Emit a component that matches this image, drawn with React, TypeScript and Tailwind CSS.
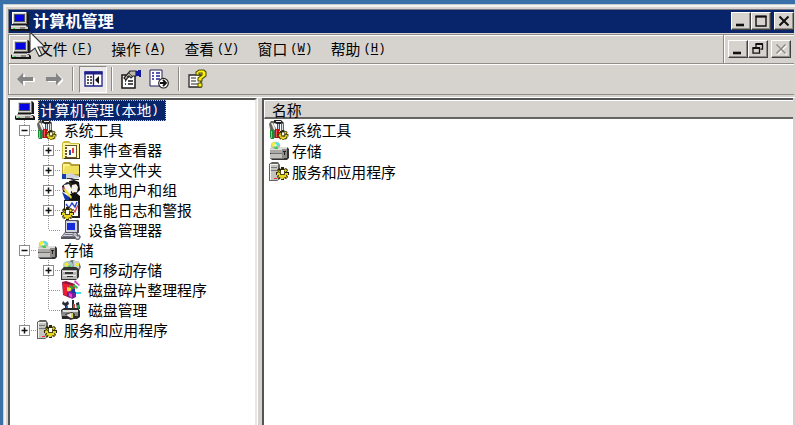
import React from "react";

type IconProps = { name: string; className?: string };

const gear = (x: number, y: number) => (
  <g transform={`translate(${x} ${y})`}>
    <path d="M5 0h3v2l2-1 2 2-1 2h2v3h-2l1 2-2 2-2-1v2H5v-2l-2 1-2-2 1-2H0V5h2L1 3l2-2 2 1z" fill="#2b2600" />
    <path d="M2 3l2 1-1 2h2l1 2h2l1-2h3v2l-2 0 1 3-2-1-2 2H5l-1-2-2 1 1-3H1V6l2-1z" fill="#e6d522" />
    <path d="M9 2l2 1-1 2-2-1z" fill="#e6d522" />
    <rect x="5" y="3" width="3" height="4" fill="#fff" />
    <path d="M4 4h1v3h3V4h1v4H4z" fill="#514a18" />
  </g>
);

const computer = (
  <g>
    <path d="M3 1h14l2 2v11h-3v1h2l2 2v3H1l-1-1v-3l3-2z" fill="#171717" />
    <path d="M2 1h14l1 1v11H2z" fill="#d8d7cf" />
    <path d="M2 1h14v1H3v11H2z" fill="#fff" />
    <path d="M16 2h1v11H3v-1h13z" fill="#77756f" />
    <path d="M4 3h11v8H4z" fill="#4c5066" />
    <path d="M5 4h9v6H5z" fill="#0505e4" />
    <path d="M1 15h15l2 1v2H1z" fill="#c9c7bf" />
    <path d="M1 14.5h15v1H1z" fill="#f8f8f5" />
    <path d="M3 17h2v1H3z" fill="#23e045" />
    <path d="M10 16.5h5v1h-5z" fill="#444" />
  </g>
);

const disk = (
  <g>
    <path d="M1 8l3-2h14l2 2v9l-2 2H3l-2-2z" fill="#343434" />
    <path d="M1 8l3-2h14v3H1z" fill="#dedddb" />
    <path d="M1 9h13v3H1z" fill="#aaa9a6" />
    <path d="M1 13h13v4H1z" fill="#c1c0bd" />
    <path d="M2 12h12v1H2zM2 17h13v1H2z" fill="#707070" />
    <path d="M13 8h5v9h-5z" fill="#8d8c89" />
    <path d="M14 10h3v1h-3z" fill="#222" />
    <path d="M15 11h1v3h-1z" fill="#222" />
    <ellipse cx="6.5" cy="4.5" rx="4.8" ry="3.8" fill="#bdbcaf" />
    <path d="M3 2l3-1 1 3-2 2-3-1z" fill="#f3ed3b" />
    <path d="M7 1l3 1 1 3-4-1z" fill="#51e2df" />
    <path d="M5 5l3 0 1 3H6z" fill="#36cf49" />
    <rect x="5.5" y="3.5" width="2" height="2" fill="#fff" />
  </g>
);

const drawings: Record<string, React.ReactNode> = {
  computer,
  tools: (
    <g>
      <path d="M2 1h3v4l3 5v8H3L0 4z" fill="#62645e" />
      <path d="M2 3l2 0 3 7H5z" fill="#e8e8e1" />
      <path d="M5 0h7l3 3v3h-3V4H8L5 3z" fill="#202020" />
      <path d="M7 1h5v1H7z" fill="#eee" />
      <path d="M8 4h3v7H8z" fill="#24509e" />
      <path d="M9 4h1v7H9z" fill="#bed7ef" />
      <path d="M1 10h4v9H2l-1-2z" fill="#198d31" />
      <path d="M2 11h1v7H2z" fill="#6be065" />
      <path d="M6 9h4v9H6z" fill="#b60f16" />
      <path d="M7 10h1v7H7z" fill="#ff5050" />
      <path d="M12 3h3v9h-3z" fill="#666" />
      <path d="M13 4h1v7h-1z" fill="#ddd" />
      <g transform="translate(9 10) scale(.8)">{gear(0, 0)}</g>
    </g>
  ),
  event: (
    <g>
      <path d="M1 3l2-2h5l2 2h8l1 1v15H1z" fill="#c9bc40" />
      <path d="M2 3h6l2 1h8v14H2z" fill="#fff29b" />
      <path d="M4 5h12v13H4z" fill="#61552d" />
      <path d="M6 6h9v11H6z" fill="#fffce5" />
      <path d="M4 6h2v1H4zm0 3h2v1H4zm0 3h2v1H4zm0 3h2v1H4z" fill="#fff" />
      <path d="M8 10h2v5H8z" fill="#2b45ce" />
      <path d="M11 8h2v5h-2z" fill="#eb3b42" />
      <path d="M18 4h1v15H3v-1h15z" fill="#40391d" />
    </g>
  ),
  share: (
    <g>
      <path d="M1 4l2-2h6l2 2h8v12H1z" fill="#b69e35" />
      <path d="M2 4h6l2 2h8v8H2z" fill="#fff489" />
      <path d="M4 6h14v8H2z" fill="#eedf5d" />
      <path d="M18 5h1v12h-2v-1h1z" fill="#40391d" />
      <path d="M1 14h4v5H1z" fill="#1442aa" />
      <path d="M5 14l5-1 4 2 4 1v2l-5 1-3-1H5z" fill="#cfd5de" />
      <path d="M6 18h5l2 1h5v1h-7l-2-1H5z" fill="#333" />
    </g>
  ),
  users: (
    <g>
      <path d="M8 1l5-1 5 2 1 8-4 4-5-1z" fill="#101010" />
      <path d="M11 5l4-1 2 3-1 5-4 2-2-4z" fill="#f4efe6" />
      <path d="M1 6l5-4 5 1-1 4-3 6-5-1z" fill="#272727" />
      <path d="M3 5l5-1 3 6-3 4-4-2z" fill="#f9f7ee" />
      <path d="M1 12l9 6v2H4z" fill="#1637a9" />
      <path d="M9 14l5-2 5 4v4H8z" fill="#111" />
      <path d="M2 9l2-1 7 9-1 2z" fill="#ece039" />
      <path d="M1 8l2-1 1 2-2 1z" fill="#d84178" />
    </g>
  ),
  perf: (
    <g>
      <path d="M3 0h16v18H3z" fill="#222" />
      <path d="M4 1h13v15H4z" fill="#fcfcff" />
      <path d="M5 4l3 4 3-5 3 4 2-5" fill="none" stroke="#2540ca" strokeWidth="1.4" />
      <path d="M12 9l2 3 3-7" fill="none" stroke="#e53a4a" strokeWidth="1.3" />
      <g transform="translate(0 7)">{gear(0, 0)}</g>
    </g>
  ),
  device: (
    <g>
      <path d="M4 0h13l1 1v12H4z" fill="#50515c" />
      <path d="M5 1h10l1 1v10H5z" fill="#d3d3e0" />
      <path d="M6 3h8v7H6z" fill="#152bdc" />
      <path d="M4 12h12l2 4v3H0v-2z" fill="#55565f" />
      <path d="M4 13h11l2 4H1z" fill="#d5d6e0" />
      <path d="M4 14h9v1H3zM2 16h12v1H2z" fill="#70717f" />
      <path d="M12 13l5 3 1-2 2 3-2 3h-3l-1-3-3-2z" fill="#6d6f78" />
      <path d="M13 14l4 3 1-1v2l-2 1-2-3-2-1z" fill="#dcdde2" />
    </g>
  ),
  disk,
  removable: (
    <g>
      <path d="M3 6l3-4 5-2 7 2 2 5-2 4h-3V9H2z" fill="#717572" />
      <ellipse cx="7" cy="5" rx="5" ry="4" fill="#a8c7c4" />
      <path d="M3 4l3-2 2 3-3 2z" fill="#f2e83a" />
      <path d="M6 7l3-2 2 3-3 1z" fill="#41c95a" />
      <path d="M12 1h6v9h-5z" fill="#c7d5d3" />
      <path d="M14 3h4v3h-4z" fill="#eee643" />
      <path d="M0 10l3-3h12l3 2v8l-3 3H0z" fill="#333" />
      <path d="M1 10h15v9H1z" fill="#b8b8b6" />
      <path d="M2 11h13v1H2zM2 15h13v1H2z" fill="#eee" />
      <path d="M4 12h8v2H4zm2 4h6v1H6z" fill="#333" />
    </g>
  ),
  defrag: (
    <g>
      <path d="M1 2l4-1 9 3v11l-5 3-7-3z" fill="#901538" />
      <path d="M2 3l4 1v12l-4-2z" fill="#ed1c32" />
      <path d="M6 4l8 2v8l-8-2z" fill="#e3242f" />
      <path d="M8 5l4 2v5l-4-2z" fill="#27a24a" />
      <path d="M6 7l4 1v4L6 11z" fill="#eddf38" />
      <path d="M7 12l4-2 4 2v5l-4 2-4-3z" fill="#7a1ca0" />
      <path d="M8 13l3 1v4l-3-2z" fill="#e645c9" />
      <path d="M11 9h3v4h-3z" fill="#1739a4" />
      <path d="M13 4l4 3-1 2-4-3z" fill="#28c64e" />
      <path d="M14 0l5 5-1 1-5-4z" fill="#c94ec4" />
      <path d="M15 12h5v2h-5z" fill="#3be0e0" />
    </g>
  ),
  diskmgmt: (
    <g>
      <path d="M2 1l2 2 3-2 1 3-2 2v4H4V6L1 4zM11 0h2v9h-2zM15 3l3-1 1 7h-3z" fill="#252c36" />
      <path d="M5 6h2v5H5z" fill="#315fca" />
      <path d="M12 4h2v6h-2z" fill="#d43e33" />
      <path d="M16 5h2v5h-2z" fill="#279b47" />
      <path d="M0 10l3-2h14l2 3v6l-3 2H1z" fill="#282828" />
      <path d="M1 10h16v6H1z" fill="#8a8a8a" />
      <path d="M2 10h15v2H2z" fill="#dedede" />
      <path d="M4 14l7-2 3 2-1 5-4 1z" fill="#353535" />
      <path d="M5 15l5-2v5z" fill="#f0f0e8" />
      <path d="M10 13h2v5h-2z" fill="#dfd549" />
    </g>
  ),
  services: (
    <g>
      <path d="M0 2l3-2h6l2 3v14l-3 2H0z" fill="#62625f" />
      <path d="M1 2h8v16H1z" fill="#c3c3bf" />
      <path d="M1 2h8v1H2v15H1z" fill="#f2f2ef" />
      <path d="M2 5h6v1H2zm0 3h6v1H2z" fill="#777" />
      <path d="M5 16h3v1H5z" fill="#ef322f" />
      {gear(7, 5)}
    </g>
  ),
  properties: (
    <g>
      <path d="M1 6h13v13H1z" fill="#fff" stroke="#171717" strokeWidth="1.5" />
      <path d="M4 12h1m2 0h5M4 15h1m2 0h5" stroke="#171717" strokeWidth="1.3" />
      <path d="M3 9l6-7h6v5h-3l-2 2-2-2-3 4z" fill="#bdb8ab" stroke="#252525" strokeWidth="1.2" />
      <path d="M8 4l3 3M6 7l2 2" stroke="#444" />
      <path d="M15 2h2V1h3v7h-2V7h-3z" fill="#111b9f" />
    </g>
  ),
  exportList: (
    <g>
      <path d="M1 1h12v16H1z" fill="#fff" stroke="#20205c" />
      <path d="M3 4h2m2 0h4M3 7h2m2 0h4M3 10h2m2 0h4" stroke="#202099" strokeWidth="1.4" />
      <circle cx="14.5" cy="14.2" r="4.8" fill="#fff" stroke="#222" strokeWidth="1.2" />
      <path d="M11 14h6m-3-3 3 3-3 3" stroke="#111" strokeWidth="1.8" fill="none" />
    </g>
  ),
  help: (
    <g>
      <path d="M1 6h12v12H1z" fill="#fff" stroke="#292929" strokeWidth="1.3" />
      <path d="M3 9h5m-5 3h5m-5 3h7" stroke="#222" />
      <path d="M8 6V3l3-2h5l2 2v4l-4 3v2h-4V9l4-3V4h-3v2z" fill="#f7ef16" stroke="#554e00" strokeWidth="1.1" />
      <path d="M10 14h4v4h-4z" fill="#f7ef16" stroke="#554e00" />
    </g>
  ),
};

function Icon({ name, className = "" }: IconProps) {
  return <svg className={`h-5 w-5 shrink-0 ${className}`} viewBox="0 0 20 20">{drawings[name]}</svg>;
}

type Node = { label: string; icon: string; level: 1 | 2; sign?: string; last?: boolean };

const nodes: Node[] = [
  { label: "系统工具", icon: "tools", level: 1, sign: "-" },
  { label: "事件查看器", icon: "event", level: 2, sign: "+" },
  { label: "共享文件夹", icon: "share", level: 2, sign: "+" },
  { label: "本地用户和组", icon: "users", level: 2, sign: "+" },
  { label: "性能日志和警报", icon: "perf", level: 2, sign: "+" },
  { label: "设备管理器", icon: "device", level: 2, last: true },
  { label: "存储", icon: "disk", level: 1, sign: "-" },
  { label: "可移动存储", icon: "removable", level: 2, sign: "+" },
  { label: "磁盘碎片整理程序", icon: "defrag", level: 2 },
  { label: "磁盘管理", icon: "diskmgmt", level: 2, last: true },
  { label: "服务和应用程序", icon: "services", level: 1, sign: "+", last: true },
];

function Branch({ sign, last, pass }: { sign?: string; last?: boolean; pass?: boolean }) {
  return (
    <svg className="h-5 w-6 shrink-0" viewBox="0 0 24 20" shapeRendering="crispEdges">
      <g stroke="#929292" strokeDasharray="1 1">
        <path d={last ? "M12.5 0V10" : "M12.5 0V20"} />
        {!pass && <path d="M13 10.5H24" />}
      </g>
      {sign && (
        <g>
          <rect x="7.5" y="5.5" width="10" height="10" fill="#fff" stroke="#8c8c8c" />
          <path d={sign === "+" ? "M9.5 10.5h6M12.5 7.5v6" : "M9.5 10.5h6"} stroke="#111" strokeWidth="1.5" shapeRendering="auto" />
        </g>
      )}
    </svg>
  );
}

function WinButton({ kind, className = "" }: { kind: string; className?: string }) {
  return (
    <div className={`h-[18px] w-5 shrink-0 border border-t-white border-l-white border-r-[#404040] border-b-[#404040] bg-[#d6d3ce] shadow-[inset_-1px_-1px_#8e8c88] ${className}`}>
      <svg className="block h-4 w-[18px]" viewBox="0 0 18 16" fill="none" stroke="#111" strokeWidth="2">
        {kind === "min" && <path d="M4 12h8" strokeWidth="2.6" />}
        {kind === "max" && <><path d="M4 3.5h10V13H4z" strokeWidth="1.4" /><path d="M3.5 3.5h11" /></>}
        {kind === "restore" && <><path d="M7 3.2h6.5v5h-2M7 3v3" strokeWidth="1.3" /><path d="M6.5 3h7.5" /><path d="M4 7.2h6.5v5H4z" strokeWidth="1.3" /><path d="M3.5 7h7.5" /></>}
        {kind === "close" && <path d="M4.5 3.5l9 9M13.5 3.5l-9 9" />}
        {kind === "disabled" && <><path d="M5.5 4.5l9 9M14.5 4.5l-9 9" stroke="#fff" strokeWidth="1.5" /><path d="M4.5 3.5l9 9M13.5 3.5l-9 9" stroke="#8b8985" strokeWidth="1.5" /></>}
      </svg>
    </div>
  );
}

function Separator({ className = "" }: { className?: string }) {
  return <div className={`h-6 w-0.5 shrink-0 border-l border-l-[#8b8985] border-r border-r-white ${className}`} />;
}

const menus = [["文件", "F"], ["操作", "A"], ["查看", "V"], ["窗口", "W"], ["帮助", "H"]];

export default function App() {
  return (
    <div className="h-[425px] w-[795px] overflow-hidden bg-[#3970a8] pt-1 pl-[3px] font-['Noto_Sans_CJK_SC',sans-serif] text-[14.85px] leading-5 text-black select-none">
      <div className="flex h-[421px] flex-col border-t border-l border-[#c7ced5] bg-[#d6d3ce] pl-1 shadow-[inset_2px_2px_#f5f3f0]">
        <div className="h-1 shrink-0" />
        <header className="mr-px flex h-6 shrink-0 items-center border-t border-l border-[#777684] bg-[#08246b] pb-[2px] pl-px">
          <Icon name="computer" />
          <h1 className="ml-[3px] grow pb-px text-[16px] leading-5 font-bold tracking-[0.2px] text-white">计算机管理</h1>
          <WinButton kind="min" />
          <WinButton kind="max" />
          <WinButton kind="close" className="ml-[3px]" />
        </header>

        <div className="relative mt-px mr-px flex h-[30px] shrink-0 items-center border-t border-b border-l border-[#8f8d89] pl-0.5 shadow-[inset_1px_1px_#fff]">
          <Icon name="computer" />
          <nav className="ml-[7px] flex grow pb-px">
            {menus.map(([label, key]) => (
              <div key={key} className="flex w-[73.2px] shrink-0">
                <span>{label}</span>
                <span className="ml-[3px] font-['Liberation_Mono',monospace] text-[12.25px]">
                  (<u className="underline-offset-2">{key}</u>)
                </span>
              </div>
            ))}
          </nav>
          <div className="h-7 w-0.5 border-l border-l-[#8b8985] border-r border-r-white" />
          <WinButton kind="min" className="ml-[3px]" />
          <WinButton kind="restore" />
          <WinButton kind="disabled" className="mr-[3px] ml-[3px]" />
          <svg className="absolute top-[-4px] left-[20px] h-[28px] w-5" viewBox="0 0 20 28">
            <path d="M1 1v20l5-4 4 8 3-1-4-8h7z" fill="#fff" stroke="#333" strokeWidth="1.1" />
          </svg>
        </div>

        <div className="mr-px flex h-[31px] shrink-0 items-center border-b border-l border-[#8f8d89] pl-2 shadow-[inset_1px_1px_#fff]">
          <svg className="h-5 w-[46px] shrink-0" viewBox="0 0 46 20">
            <path d="M1 10l6-6v4h10v4H7v4zM46 10l-6-6v4H30v4h10v4z" fill="#fff" transform="translate(1 1)" />
            <path d="M0 10l6-6v4h10v4H6v4zM45 10l-6-6v4H29v4h10v4z" fill="#858585" />
          </svg>
          <Separator className="ml-[9px]" />
          <div className="ml-[5px] flex h-[27px] w-7 shrink-0 items-center justify-center border border-t-[#8b8985] border-l-[#8b8985] border-r-white border-b-white bg-[#ebe9e7]">
            <svg className="h-[18px] w-5" viewBox="0 0 20 18">
              <path d="M2 2h17v14H2z" fill="#fff" stroke="#20208a" strokeWidth="1.3" />
              <path d="M1.5 3h18" stroke="#20208a" strokeWidth="3" />
              <path d="M10.5 4v12" stroke="#20208a" strokeWidth="1.3" />
              <path d="M4 7h2m1 0h2M4 10h2m1 0h2M4 13h2m1 0h2" stroke="#222" strokeWidth="1.5" />
              <path d="M16 6v8l-4-4z" fill="#111" />
            </svg>
          </div>
          <Separator className="ml-1" />
          <Icon name="properties" className="ml-[8px]" />
          <Icon name="exportList" className="ml-[8px]" />
          <Separator className="ml-[9px]" />
          <Icon name="help" className="ml-2" />
        </div>

        <div className="mt-[2px] flex min-h-0 grow border-t border-t-white">
          <aside className="flex w-[249px] shrink-0 flex-col border-t-2 border-r-2 border-l-2 border-t-[#555] border-r-[#e8e7e3] border-l-[#555] bg-white pl-px">
            <div className="flex h-5 shrink-0 pl-1">
              <Icon name="computer" />
              <div className="ml-[3px] flex h-[21px] w-[128px] items-center border border-dotted border-[#e0c27b] bg-[#08246b] pb-px pl-px leading-5 text-white">
                计算机管理<span className="font-['Liberation_Mono',monospace] text-[12.25px]">(</span>本地<span className="font-['Liberation_Mono',monospace] text-[12.25px]">)</span>
              </div>
            </div>
            {nodes.map((node) => (
              <div key={node.label} className="flex h-5 shrink-0 items-center pl-px whitespace-nowrap">
                {node.level === 2 && <Branch pass />}
                <Branch sign={node.sign} last={node.last} />
                <Icon name={node.icon} className="ml-px" />
                <span className="ml-[7px]">{node.label}</span>
              </div>
            ))}
          </aside>
          <div className="w-[5px] shrink-0 border-l border-l-white" />
          <main className="mr-[2px] min-w-0 grow border-t-2 border-l-2 border-[#555] bg-white">
            <div className="h-[19px] border-t border-b-2 border-l border-t-white border-b-[#666563] border-l-white bg-[#d6d3ce] pl-[7px] leading-[18px]">名称</div>
            <ul className="pl-[5px]">
              {[nodes[0], nodes[6], nodes[10]].map((node) => (
                <li key={node.label} className="flex h-[21px] items-center">
                  <Icon name={node.icon} />
                  <span className="ml-[3px]">{node.label}</span>
                </li>
              ))}
            </ul>
          </main>
        </div>
      </div>
    </div>
  );
}
